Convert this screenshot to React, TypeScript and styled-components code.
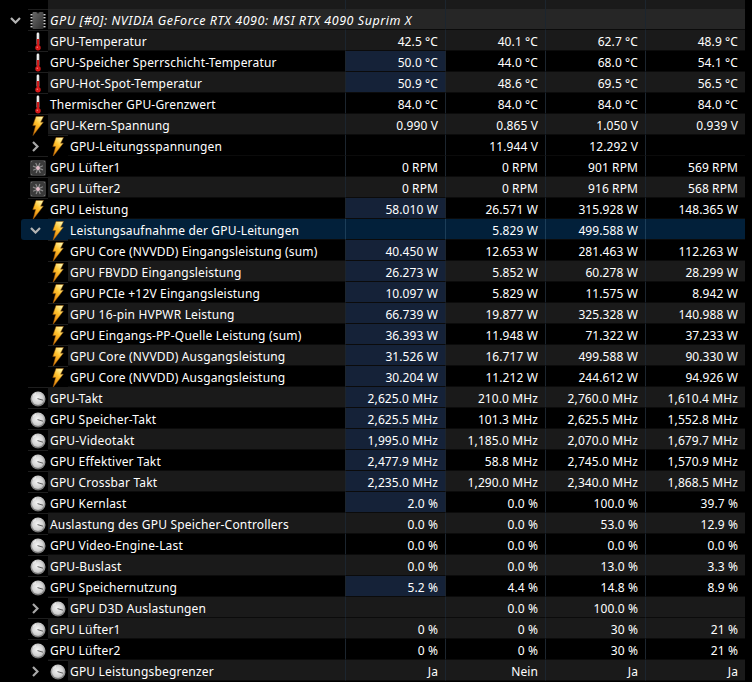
import React from "react";
import styled, { createGlobalStyle } from "styled-components";

const Global = createGlobalStyle`
  html, body { margin: 0; padding: 0; background: #000; height: 100%; overflow: hidden; }
  #root { width: 752px; height: 682px; overflow: hidden; }
`;

type Tone = "dark" | "black" | "head" | "selected";
const toneBg: Record<Tone, string> = { dark: "#1a1a1a", black: "#000", head: "#262626", selected: "#02203a" };

const Sheet = styled.div`
  width: 745px;
  display: flex;
  flex-direction: column;
  font-family: "Noto Sans", "Open Sans", sans-serif;
  font-size: 12px;
  color: #fff;
`;
const Row = styled.div<{ $h?: number }>`
  display: flex;
  height: ${(p) => p.$h ?? 21}px;
  flex: none;
`;
const Gutter = styled.div<{ $width: number; $sel?: boolean; $padLeft: number }>`
  flex: none;
  box-sizing: border-box;
  width: ${(p) => (p.$sel ? p.$width - 21 : p.$width)}px;
  margin-left: ${(p) => (p.$sel ? 21 : 0)}px;
  padding-left: ${(p) => (p.$sel ? p.$padLeft - 21 : p.$padLeft)}px;
  padding-top: 2px;
  background: ${(p) => (p.$sel ? toneBg.selected : "transparent")};
  border-radius: ${(p) => (p.$sel ? "3px 0 0 3px" : "0")};
  display: flex;
  align-items: center;
`;
const IconCell = styled.div<{ $sel?: boolean }>`
  flex: none;
  width: 20px;
  box-sizing: border-box;
  padding-top: 1px;
  border-top: 1px solid ${(p) => (p.$sel ? "transparent" : "#1e1e1e")};
  background: ${(p) => (p.$sel ? toneBg.selected : "#000")};
  display: flex;
  align-items: center;
  justify-content: center;
`;
const Label = styled.div<{ $tone: Tone; $italic?: boolean }>`
  flex: 1;
  min-width: 0;
  box-sizing: border-box;
  padding-left: 2px;
  white-space: nowrap;
  background: ${(p) => toneBg[p.$tone]};
  border-bottom: 1px solid #0b0b0b;
  font-style: ${(p) => (p.$italic ? "italic" : "normal")};
  font-size: ${(p) => (p.$italic ? "12.5px" : "12px")};
  line-height: 24px;
  letter-spacing: ${(p) => (p.$italic ? "0.55px" : "0.18px")};
  position: ${(p) => (p.$italic ? "relative" : "static")};
  z-index: ${(p) => (p.$italic ? 1 : "auto")};
`;
const Value = styled.div<{ $tone: Tone; $hot?: boolean }>`
  flex: none;
  width: 100px;
  box-sizing: border-box;
  padding-right: 7px;
  text-align: right;
  white-space: nowrap;
  background: ${(p) => (p.$hot ? "#152238" : toneBg[p.$tone])};
  border-left: 1px solid ${(p) => (p.$tone === "selected" ? "#1b3d58" : "#1c252e")};
  border-bottom: 1px solid #0b0b0b;
  line-height: 24px;
  letter-spacing: 0.1px;
`;
const Spacer = styled.div`
  flex: 1;
  box-sizing: border-box;
  background: #1a1a1a;
  border-left: 1px solid #1c252e;
`;
const HeadFill = styled.div`
  flex: none;
  width: 297px;
  margin-left: 48px;
  background: #1a1a1a;
`;
const HeadCell = styled.div`
  flex: none;
  width: 100px;
  box-sizing: border-box;
  background: #1a1a1a;
  border-left: 1px solid #1c252e;
`;
const DefsHolder = styled.svg`
  position: absolute;
  width: 0;
  height: 0;
`;

const Defs = () => (
  <DefsHolder aria-hidden="true">
    <defs>
      <linearGradient id="bolt" x1="0.7" y1="0" x2="0.2" y2="1">
        <stop offset="0" stopColor="#fff6a8" />
        <stop offset="0.4" stopColor="#ffc22e" />
        <stop offset="1" stopColor="#e07a08" />
      </linearGradient>
      <linearGradient id="chip" x1="0" y1="0" x2="1" y2="1">
        <stop offset="0" stopColor="#6a6a6a" />
        <stop offset="1" stopColor="#2c2c2c" />
      </linearGradient>
      <radialGradient id="face" cx="0.45" cy="0.4" r="0.7">
        <stop offset="0" stopColor="#f4f4f4" />
        <stop offset="0.7" stopColor="#d0d0d0" />
        <stop offset="1" stopColor="#a0a0a0" />
      </radialGradient>
      <linearGradient id="rim" x1="0" y1="0" x2="0" y2="1">
        <stop offset="0" stopColor="#d0d0d0" />
        <stop offset="1" stopColor="#707070" />
      </linearGradient>
      <linearGradient id="therm" x1="0" y1="0" x2="1" y2="0">
        <stop offset="0" stopColor="#d8d8d8" />
        <stop offset="0.5" stopColor="#ffffff" />
        <stop offset="1" stopColor="#a8a8a8" />
      </linearGradient>
    </defs>
  </DefsHolder>
);

const Bolt = () => (
  <svg width="12" height="20" viewBox="0 0 12 20">
    <path d="M4 0.5 L11.5 0.5 L8.6 6.2 L11.3 6.2 L1 19.5 L3.6 9.6 L0.8 9.6 Z" fill="url(#bolt)" stroke="#9a5a08" strokeWidth="0.5" />
  </svg>
);
const Thermo = () => (
  <svg width="8" height="19" viewBox="0 0 8 19">
    <rect x="2.6" y="0.5" width="2.8" height="13" rx="1.4" fill="url(#therm)" />
    <rect x="2.8" y="7" width="2.4" height="8" fill="#d01c1c" />
    <circle cx="4" cy="15.8" r="2.7" fill="#d81a1a" />
    <circle cx="3.3" cy="15.2" r="0.7" fill="#f58080" />
  </svg>
);
const Chip = () => (
  <svg width="16" height="19" viewBox="0 0 16 19">
    <rect x="2.5" y="1" width="11" height="17" rx="1" fill="url(#chip)" />
    <path d="M6.5 1 a1.5 1.5 0 0 0 3 0 Z" fill="#1a1a1a" />
    {[3, 6, 9, 12, 15].map((y) => (
      <g key={y} fill="#d0d0d0">
        <rect x="0.5" y={y} width="2" height="1.4" />
        <rect x="13.5" y={y} width="2" height="1.4" />
      </g>
    ))}
  </svg>
);
const Fan = () => (
  <svg width="16" height="16" viewBox="0 0 16 16">
    <rect x="0" y="0" width="16" height="16" rx="2" fill="#3a3a3a" />
    {[0, 45, 90, 135, 180, 225, 270, 315].map((a) => (
      <line key={a} x1="8" y1="8" x2="8" y2="2.6" stroke="#8c8c8c" strokeWidth="1.2" transform={`rotate(${a + 20} 8 8)`} />
    ))}
    <circle cx="8" cy="8" r="1.9" fill="#e4bcc8" />
    {[[1.6, 1.6], [14.4, 1.6], [1.6, 14.4], [14.4, 14.4]].map(([x, y]) => (
      <circle key={x * 100 + y} cx={x} cy={y} r="0.7" fill="#707070" />
    ))}
  </svg>
);
const Gauge = () => (
  <svg width="16" height="16" viewBox="0 0 16 16">
    <circle cx="8" cy="8" r="7.5" fill="url(#rim)" />
    <circle cx="8" cy="8" r="6" fill="url(#face)" />
    <path d="M7.5 7.6 L13 9.2" fill="none" stroke="#5f5f5f" strokeWidth="1" />
    <path d="M3 4.5 A6 6 0 0 1 6 2.6" fill="none" stroke="#fff" strokeWidth="0.8" />
  </svg>
);
const icons = { bolt: Bolt, thermo: Thermo, chip: Chip, fan: Fan, gauge: Gauge };

const Chevron = ({ open }: { open: boolean }) =>
  open ? (
    <svg width="11" height="7" viewBox="0 0 11 7">
      <polyline points="1,1 5.5,5.5 10,1" fill="none" stroke="#b4b4b4" strokeWidth="2.2" />
    </svg>
  ) : (
    <svg width="7" height="11" viewBox="0 0 7 11">
      <polyline points="1,1 5.5,5.5 1,10" fill="none" stroke="#a8a8a8" strokeWidth="2.2" />
    </svg>
  );

type RowData = {
  icon: keyof typeof icons;
  label: string;
  vals: string[];
  tone: Tone;
  hot?: boolean;
  nested?: boolean;
  toggle?: "open" | "closed";
  italic?: boolean;
};

const d: Tone = "dark";
const b: Tone = "black";
const rows: RowData[] = [
  { icon: "chip", label: "GPU [#0]: NVIDIA GeForce RTX 4090: MSI RTX 4090 Suprim X", vals: ["", "", "", ""], tone: "head", toggle: "open", italic: true },
  { icon: "thermo", label: "GPU-Temperatur", vals: ["42.5 °C", "40.1 °C", "62.7 °C", "48.9 °C"], tone: d },
  { icon: "thermo", label: "GPU-Speicher Sperrschicht-Temperatur", vals: ["50.0 °C", "44.0 °C", "68.0 °C", "54.1 °C"], tone: b, hot: true },
  { icon: "thermo", label: "GPU-Hot-Spot-Temperatur", vals: ["50.9 °C", "48.6 °C", "69.5 °C", "56.5 °C"], tone: d, hot: true },
  { icon: "thermo", label: "Thermischer GPU-Grenzwert", vals: ["84.0 °C", "84.0 °C", "84.0 °C", "84.0 °C"], tone: b },
  { icon: "bolt", label: "GPU-Kern-Spannung", vals: ["0.990 V", "0.865 V", "1.050 V", "0.939 V"], tone: d },
  { icon: "bolt", label: "GPU-Leitungsspannungen", vals: ["", "11.944 V", "12.292 V", ""], tone: b, nested: true, toggle: "closed" },
  { icon: "fan", label: "GPU Lüfter1", vals: ["0 RPM", "0 RPM", "901 RPM", "569 RPM"], tone: b },
  { icon: "fan", label: "GPU Lüfter2", vals: ["0 RPM", "0 RPM", "916 RPM", "568 RPM"], tone: d },
  { icon: "bolt", label: "GPU Leistung", vals: ["58.010 W", "26.571 W", "315.928 W", "148.365 W"], tone: b, hot: true },
  { icon: "bolt", label: "Leistungsaufnahme der GPU-Leitungen", vals: ["", "5.829 W", "499.588 W", ""], tone: "selected", nested: true, toggle: "open" },
  { icon: "bolt", label: "GPU Core (NVVDD) Eingangsleistung (sum)", vals: ["40.450 W", "12.653 W", "281.463 W", "112.263 W"], tone: b, nested: true, hot: true },
  { icon: "bolt", label: "GPU FBVDD Eingangsleistung", vals: ["26.273 W", "5.852 W", "60.278 W", "28.299 W"], tone: d, nested: true, hot: true },
  { icon: "bolt", label: "GPU PCIe +12V Eingangsleistung", vals: ["10.097 W", "5.829 W", "11.575 W", "8.942 W"], tone: b, nested: true, hot: true },
  { icon: "bolt", label: "GPU 16-pin HVPWR Leistung", vals: ["66.739 W", "19.877 W", "325.328 W", "140.988 W"], tone: d, nested: true, hot: true },
  { icon: "bolt", label: "GPU Eingangs-PP-Quelle Leistung (sum)", vals: ["36.393 W", "11.948 W", "71.322 W", "37.233 W"], tone: b, nested: true, hot: true },
  { icon: "bolt", label: "GPU Core (NVVDD) Ausgangsleistung", vals: ["31.526 W", "16.717 W", "499.588 W", "90.330 W"], tone: d, nested: true, hot: true },
  { icon: "bolt", label: "GPU Core (NVVDD) Ausgangsleistung", vals: ["30.204 W", "11.212 W", "244.612 W", "94.926 W"], tone: b, nested: true, hot: true },
  { icon: "gauge", label: "GPU-Takt", vals: ["2,625.0 MHz", "210.0 MHz", "2,760.0 MHz", "1,610.4 MHz"], tone: d, hot: true },
  { icon: "gauge", label: "GPU Speicher-Takt", vals: ["2,625.5 MHz", "101.3 MHz", "2,625.5 MHz", "1,552.8 MHz"], tone: b, hot: true },
  { icon: "gauge", label: "GPU-Videotakt", vals: ["1,995.0 MHz", "1,185.0 MHz", "2,070.0 MHz", "1,679.7 MHz"], tone: d, hot: true },
  { icon: "gauge", label: "GPU Effektiver Takt", vals: ["2,477.9 MHz", "58.8 MHz", "2,745.0 MHz", "1,570.9 MHz"], tone: b, hot: true },
  { icon: "gauge", label: "GPU Crossbar Takt", vals: ["2,235.0 MHz", "1,290.0 MHz", "2,340.0 MHz", "1,868.5 MHz"], tone: d, hot: true },
  { icon: "gauge", label: "GPU Kernlast", vals: ["2.0 %", "0.0 %", "100.0 %", "39.7 %"], tone: b, hot: true },
  { icon: "gauge", label: "Auslastung des GPU Speicher-Controllers", vals: ["0.0 %", "0.0 %", "53.0 %", "12.9 %"], tone: d },
  { icon: "gauge", label: "GPU Video-Engine-Last", vals: ["0.0 %", "0.0 %", "0.0 %", "0.0 %"], tone: b },
  { icon: "gauge", label: "GPU-Buslast", vals: ["0.0 %", "0.0 %", "13.0 %", "3.3 %"], tone: d },
  { icon: "gauge", label: "GPU Speichernutzung", vals: ["5.2 %", "4.4 %", "14.8 %", "8.9 %"], tone: b, hot: true },
  { icon: "gauge", label: "GPU D3D Auslastungen", vals: ["", "0.0 %", "100.0 %", ""], tone: d, nested: true, toggle: "closed" },
  { icon: "gauge", label: "GPU Lüfter1", vals: ["0 %", "0 %", "30 %", "21 %"], tone: d },
  { icon: "gauge", label: "GPU Lüfter2", vals: ["0 %", "0 %", "30 %", "21 %"], tone: b },
  { icon: "gauge", label: "GPU Leistungsbegrenzer", vals: ["Ja", "Nein", "Ja", "Ja"], tone: d, nested: true, toggle: "closed" },
];

export default function App() {
  return (
    <>
      <Global />
      <Defs />
      <Sheet>
        <Row $h={9}>
          <HeadFill />
          <HeadCell />
          <HeadCell />
          <HeadCell />
          <Spacer />
        </Row>
        {rows.map((r, i) => {
          const Icon = icons[r.icon];
          const sel = r.tone === "selected";
          const padLeft = r.toggle === "open" ? (r.nested ? 30 : 10) : r.toggle ? 32 : 0;
          return (
            <Row key={i}>
              <Gutter $width={r.nested ? 48 : 28} $sel={sel} $padLeft={padLeft}>
                {r.toggle && <Chevron open={r.toggle === "open"} />}
              </Gutter>
              <IconCell $sel={sel}>
                <Icon />
              </IconCell>
              <Label $tone={r.tone} $italic={r.italic}>
                {r.label}
              </Label>
              {r.vals.map((v, j) => (
                <Value key={j} $tone={r.tone} $hot={j === 0 && r.hot}>
                  {v}
                </Value>
              ))}
            </Row>
          );
        })}
      </Sheet>
    </>
  );
}
